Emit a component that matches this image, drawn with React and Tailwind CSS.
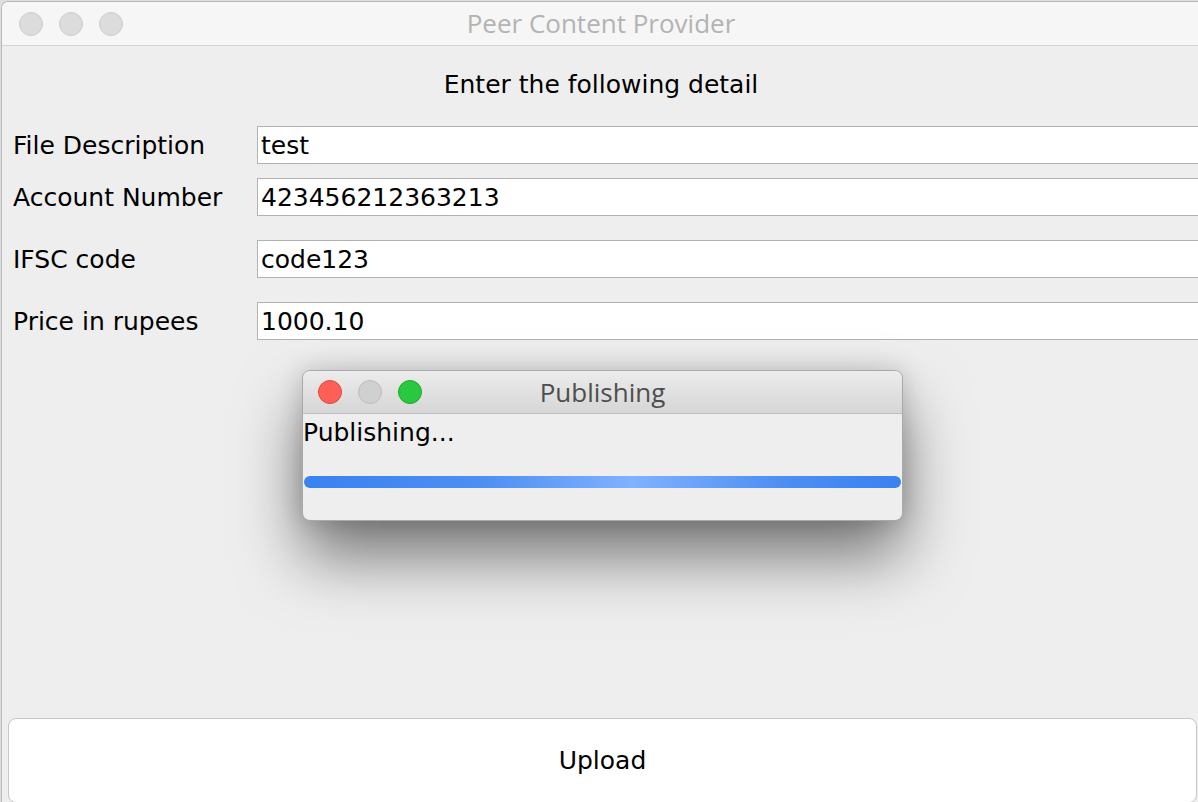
import React from "react";

const ui = { fontFamily: '"DejaVu Sans", "Noto Sans", sans-serif' };
const sys = { fontFamily: '"Open Sans", "Liberation Sans", Arial, sans-serif' };

function Field({ label, value, className }) {
  return (
    <div className={`flex items-center h-[38px] ${className}`}>
      <div className="w-[255px] shrink-0 pl-[11px] text-[25px] text-black leading-none">{label}</div>
      <div className="flex-1 h-[38px] bg-white border border-[#b2b2b2] flex items-center pl-[3px] text-[25px] text-black leading-none">
        {value}
      </div>
    </div>
  );
}

function Light({ color, border }) {
  return <div className={`w-[24px] h-[24px] rounded-full border ${color} ${border}`} />;
}

export default function App() {
  return (
    <div className="w-[1198px] h-[802px] overflow-hidden bg-[#dedede] relative" style={ui}>
      <div className="ml-[1px] mt-[1px] w-[1220px] h-[801px] bg-[#eeeeee] border-l border-t border-[#b9b9b9] rounded-tl-[7px] flex flex-col overflow-hidden">
        {/* title bar */}
        <div className="h-[44px] shrink-0 bg-[#f6f6f6] border-b border-[#d3d3d3] flex items-center relative">
          <div className="flex gap-[16px] pl-[17px]">
            <Light color="bg-[#dcdcdc]" border="border-[#cdcdcd]" />
            <Light color="bg-[#dcdcdc]" border="border-[#cdcdcd]" />
            <Light color="bg-[#dcdcdc]" border="border-[#cdcdcd]" />
          </div>
          <div className="absolute left-0 w-[1198px] text-center text-[26px] text-[#b3b3b3]" style={sys}>
            Peer Content Provider
          </div>
        </div>
        {/* heading */}
        <div className="w-[1198px] text-center text-[25px] text-black pt-[26px] h-[80px] leading-none">
          Enter the following detail
        </div>
        <Field label="File Description" value="test" />
        <Field label="Account Number" value="423456212363213" className="mt-[14px]" />
        <Field label="IFSC code" value="code123" className="mt-[24px]" />
        <Field label="Price in rupees" value="1000.10" className="mt-[24px]" />
        <div className="flex-1" />
        <div className="ml-[6px] w-[1189px] h-[85px] shrink-0 bg-white border border-[#c6c6c6] rounded-[8px] flex items-center justify-center text-[25px] text-black mb-[-1px]">
          Upload
        </div>
      </div>

      {/* dialog */}
      <div className="absolute left-[302px] top-[370px] w-[601px] h-[151px] rounded-[8px] border border-[#a9a9a9] bg-[#eeeeee] overflow-hidden shadow-[0_36px_64px_rgba(0,0,0,0.5),0_0_24px_rgba(0,0,0,0.16)] flex flex-col">
        <div className="h-[43px] shrink-0 bg-gradient-to-b from-[#ececec] to-[#d6d6d6] border-b border-[#bdbdbd] flex items-center relative">
          <div className="flex gap-[16px] pl-[15px]">
            <Light color="bg-[#fe5f57]" border="border-[#e2463f]" />
            <Light color="bg-[#d0d0d0]" border="border-[#bcbcbc]" />
            <Light color="bg-[#2ac840]" border="border-[#1aab29]" />
          </div>
          <div className="absolute inset-x-0 text-center text-[26px] text-[#4e4e4e]" style={sys}>
            Publishing
          </div>
        </div>
        <div className="pl-[0px] pt-[6px] text-[25px] text-black leading-none">Publishing...</div>
        <div className="mt-[31px] mx-[1px] h-[12px] rounded-full bg-[linear-gradient(90deg,#3a82f0_0%,#4d8ff3_30%,#7fb2ff_55%,#4d8ff3_80%,#3a82f0_100%)]" />
      </div>
    </div>
  );
}
